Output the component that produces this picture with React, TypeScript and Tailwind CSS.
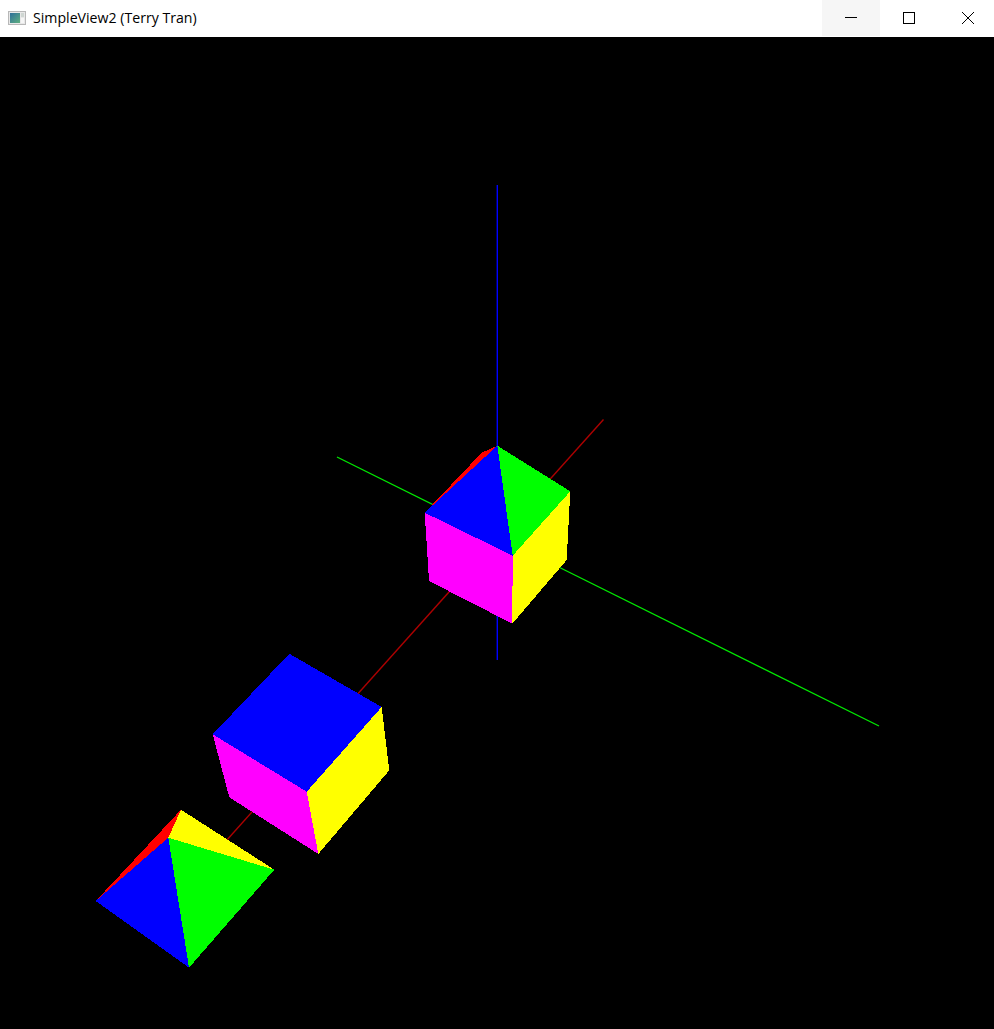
import React from 'react';

const solidPolys: [string, string][] = [
  // far cube
  ['#ff0000', '424.7,512.7 481.7,452.7 490,449 497.3,445.7'],
  ['#0000ff', '497.3,445.7 424.7,512.7 512.7,555.7'],
  ['#00ff00', '497.3,445.7 570.3,491.3 512.7,555.7'],
  ['#ff00ff', '424.7,512.7 512.7,555.7 512.3,623.7 429,581'],
  ['#ffff00', '512.7,555.7 570.3,491.3 566.7,560 512.3,623.7'],
  // middle cube
  ['#0000ff', '289.3,653.7 212.7,734.3 306.7,791.7 381.7,707'],
  ['#ff00ff', '212.7,734.3 306.7,791.7 318.3,854 229.3,797.3'],
  ['#ffff00', '306.7,791.7 381.7,707 389.3,770.3 318.3,854'],
  // pyramid
  ['#ff0000', '181,809.7 168.3,837.7 95.7,901'],
  ['#ffff00', '181,809.7 274.3,869.7 168.3,837.7'],
  ['#00ff00', '168.3,837.7 274.3,869.7 189,967.7'],
  ['#0000ff', '168.3,837.7 189,967.7 95.7,901'],
];

const Scene = () => (
  <svg viewBox="0 37 994 992" className="block h-full w-full">
    <rect x="496.6" y="185" width="1.4" height="475" fill="#0000ff" />
    <line x1="603.5" y1="419.5" x2="226" y2="841" stroke="#ac0000" strokeWidth="1.4" />
    <line x1="337" y1="457" x2="879" y2="726" stroke="#00e800" strokeWidth="1.3" />
    <g shapeRendering="crispEdges">
      {solidPolys.map(([fill, points], i) => (
        <polygon key={i} fill={fill} points={points} />
      ))}
    </g>
  </svg>
);

const AppIcon = () => (
  <svg width="18" height="16" viewBox="0 0 18 16" className="shrink-0">
    <defs>
      <linearGradient id="ic" x1="0" y1="0" x2="1" y2="1">
        <stop offset="0" stopColor="#2f6f9a" />
        <stop offset="1" stopColor="#5fb080" />
      </linearGradient>
    </defs>
    <rect x="0.5" y="1.5" width="17" height="13" fill="#e8e8e8" stroke="#b8b8b8" />
    <rect x="2" y="3" width="10" height="10" fill="url(#ic)" />
    <rect x="13" y="3" width="3" height="4" fill="#cfd6d2" />
    <rect x="13" y="8" width="3" height="5" fill="#f6f6f6" />
  </svg>
);

export default function App() {
  return (
    <div className="flex h-[1029px] w-[994px] flex-col overflow-hidden bg-black">
      <div className="flex h-[37px] shrink-0 items-start bg-white">
        <div className="flex h-[36px] min-w-0 flex-1 items-center gap-[7px] pl-2">
          <AppIcon />
          <span className="font-['Open_Sans',sans-serif] text-[14.15px] leading-none text-black">SimpleView2 (Terry Tran)</span>
        </div>
        <div className="flex h-[36px] w-[58px] shrink-0 items-center justify-center bg-[#f6f6f6]">
          <svg width="12" height="12" viewBox="0 0 12 12"><line x1="0" y1="5.5" x2="12" y2="5.5" stroke="#000" /></svg>
        </div>
        <div className="flex h-[36px] w-[58px] shrink-0 items-center justify-center">
          <svg width="12" height="12" viewBox="0 0 12 12"><rect x="0.5" y="0.5" width="11" height="11" fill="none" stroke="#000" /></svg>
        </div>
        <div className="flex h-[36px] w-[56px] shrink-0 items-center justify-center pl-[4px]">
          <svg width="12" height="12" viewBox="0 0 12 12"><path d="M0 0 L12 12 M12 0 L0 12" stroke="#000" fill="none" /></svg>
        </div>
      </div>
      <div className="min-h-0 flex-1">
        <Scene />
      </div>
    </div>
  );
}
